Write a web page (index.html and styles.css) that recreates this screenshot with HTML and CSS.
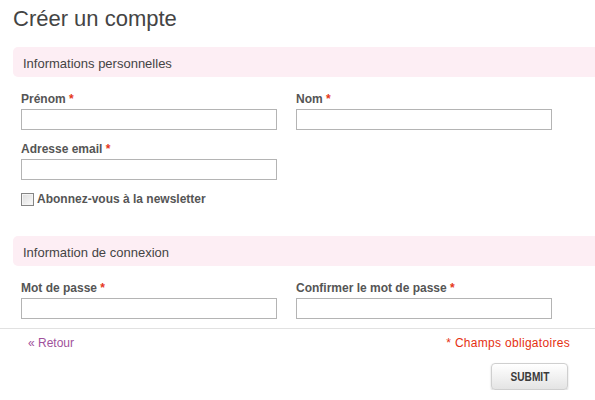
FILE: index.html
```html
<!DOCTYPE html>
<html lang="fr">
<head>
    <meta charset="UTF-8">
    <meta name="viewport" content="width=device-width, initial-scale=1.0">
    <title>Créer un compte</title>
    <link rel="stylesheet" href="styles.css">
</head>
<body>
    <form class="compte" action="#">
        <div class="page">
            <h1>Créer un compte</h1>

            <h2 class="section">Informations personnelles</h2>
            <div class="champs">
                <div class="ligne">
                    <div class="champ">
                        <label for="prenom">Prénom <em>*</em></label>
                        <input type="text" id="prenom" name="prenom">
                    </div>
                    <div class="champ">
                        <label for="nom">Nom <em>*</em></label>
                        <input type="text" id="nom" name="nom">
                    </div>
                </div>
                <div class="ligne">
                    <div class="champ">
                        <label for="email">Adresse email <em>*</em></label>
                        <input type="text" id="email" name="email">
                    </div>
                </div>
                <div class="case">
                    <input type="checkbox" id="newsletter" name="newsletter">
                    <label for="newsletter">Abonnez-vous à la newsletter</label>
                </div>
            </div>

            <h2 class="section">Information de connexion</h2>
            <div class="champs">
                <div class="ligne">
                    <div class="champ">
                        <label for="motdepasse">Mot de passe <em>*</em></label>
                        <input type="password" id="motdepasse" name="motdepasse">
                    </div>
                    <div class="champ">
                        <label for="confirmation">Confirmer le mot de passe <em>*</em></label>
                        <input type="password" id="confirmation" name="confirmation">
                    </div>
                </div>
            </div>
        </div>

        <div class="actions">
            <div class="liens">
                <a href="#" class="retour">« Retour</a>
                <span class="requis">* Champs obligatoires</span>
            </div>
            <button type="submit" class="bouton"><span>SUBMIT</span></button>
        </div>
    </form>
</body>
</html>
```

FILE: styles.css
```css
/* Général */
body {
    margin: 0;
    font-family: "Liberation Sans", Arial, sans-serif;
    color: #555;
    background: #fff;
    overflow: hidden;
}

.page {
    padding-left: 13px;
}

h1 {
    margin: 6px 0 15px;
    font-size: 22px;
    line-height: 26px;
    font-weight: normal;
    color: #444;
}

/* Bandeaux de section */
.section {
    margin: 0;
    height: 30px;
    box-sizing: border-box;
    padding: 3px 0 0 10px;
    font-size: 13px;
    line-height: 27px;
    font-weight: normal;
    color: #444;
    background: #fdeef4;
    border-radius: 5px 0 0 5px;
}

.champs {
    padding: 15px 0 29px 8px;
}

.champs:last-child {
    padding-bottom: 9px;
}

.ligne {
    display: flex;
    gap: 19px;
    margin-bottom: 12px;
}

.ligne:last-child {
    margin-bottom: 0;
}

.champ {
    width: 256px;
}

label {
    display: block;
    margin-bottom: 2px;
    font-size: 12px;
    line-height: 15px;
    font-weight: bold;
    color: #555;
}

label em {
    font-style: normal;
    color: #e5361b;
}

input[type="text"],
input[type="password"] {
    display: block;
    width: 256px;
    height: 21px;
    box-sizing: border-box;
    margin: 0;
    padding: 2px 4px;
    border: 1px solid #b4b4b4;
    background: #fff;
    font-family: inherit;
}

/* Case à cocher */
.case {
    display: flex;
    align-items: center;
    gap: 3px;
    height: 15px;
    margin-top: 12px;
}

.case label {
    margin: 0;
}

.case input {
    appearance: none;
    -webkit-appearance: none;
    width: 13px;
    height: 13px;
    margin: 0;
    border: 1px solid #858585;
    background: linear-gradient(135deg, #dcdcdc, #fbfbfb);
    box-shadow: inset 0 0 0 1px #f4f4f4;
}

/* Pied du formulaire */
.actions {
    border-top: 1px solid #e1e1e1;
    padding: 7px 27px 0 28px;
}

.liens {
    display: flex;
    justify-content: space-between;
    font-size: 12px;
    line-height: 15px;
}

.retour {
    color: #a0519b;
    text-decoration: none;
}

.requis {
    color: #e53012;
    letter-spacing: 0.3px;
    margin-right: -2px;
}

.bouton {
    display: block;
    margin: 12px 0 0 auto;
    width: 77px;
    height: 27px;
    padding: 0;
    border: 1px solid #cfcfcf;
    border-radius: 4px;
    background: linear-gradient(#ffffff, #e4e4e4);
    box-shadow: 0 1px 2px rgba(0, 0, 0, 0.2);
    font-family: "Liberation Sans", Arial, sans-serif;
    font-size: 13px;
    font-weight: bold;
    color: #3a3a3a;
    cursor: pointer;
}

/* police étroite simulée */
.bouton span {
    display: inline-block;
    transform: scaleX(0.78);
}
```
